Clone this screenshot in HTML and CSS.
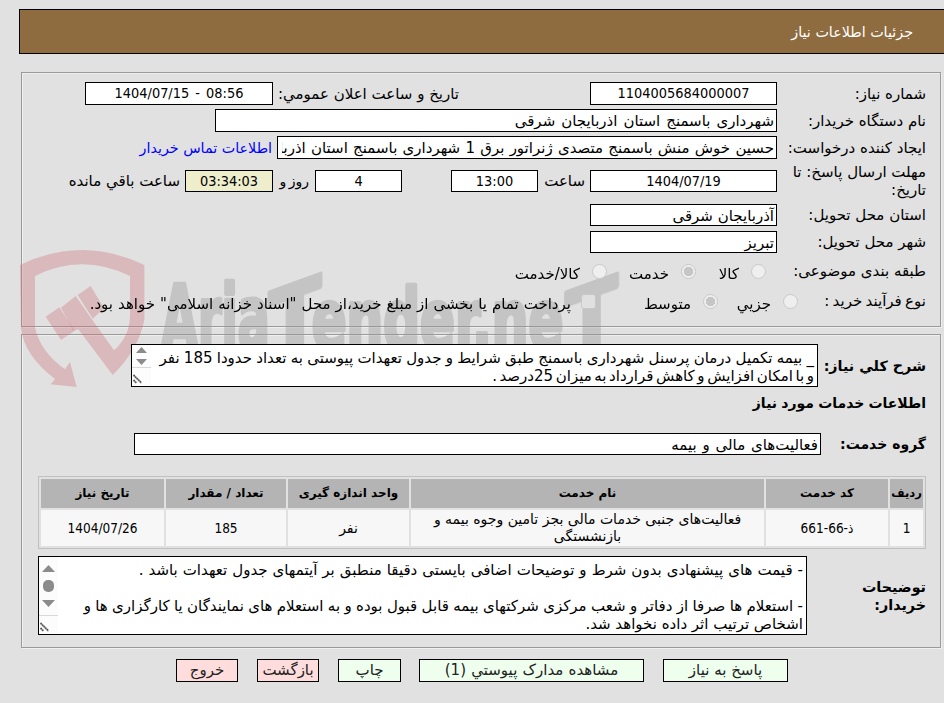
FILE: index.html
```html
<!DOCTYPE html>
<html lang="fa" dir="rtl">
<head>
    <meta charset="UTF-8">
    <title>جزئیات اطلاعات نیاز</title>
    <link rel="stylesheet" href="styles.css">
</head>
<body>

<div class="header">جزئیات اطلاعات نیاز</div>

<svg class="watermark" viewBox="30 27 1800 420" direction="ltr">
    <g fill="#cd7379" fill-opacity=".36">
        <path d="M30 75Q215-15 403 75V240Q385 330 308 405L205 268L190 272L153 203L197 168L245 237L312 331Q358 290 360 230V108Q215 38 75 108V262Q90 335 165 388L180 366L200 441L122 433L135 417Q40 345 33 262Z"/>
        <path d="M107 230L148 202L194 272L153 300ZM203 165L242 138L282 205L248 236Z"/>
    </g>
    <g class="watermark-text">
        <text x="454" y="328" font-size="268" textLength="325" lengthAdjust="spacingAndGlyphs">Aria</text>
        <text transform="translate(855 0) skewY(-20)" text-anchor="middle" y="328" font-size="270" textLength="155" lengthAdjust="spacingAndGlyphs">T</text>
        <text x="905" y="328" font-size="250" textLength="755" lengthAdjust="spacingAndGlyphs">ender.ne</text>
        <text transform="translate(1745 0) skewY(-20)" text-anchor="middle" y="328" font-size="270" textLength="155" lengthAdjust="spacingAndGlyphs">T</text>
    </g>
</svg>

<div class="panel info">
    <div class="row">
        <div class="label">شماره نیاز:</div>
        <div class="input w187 center">1104005684000007</div>
        <div class="text announce">تاریخ و ساعت اعلان عمومي:</div>
        <div class="input w188 center date-time" dir="ltr">1404/07/15 - 08:56</div>
    </div>
    <div class="row">
        <div class="label">نام دستگاه خریدار:</div>
        <div class="input w562"><span class="t-org">شهرداری باسمنج استان اذربایجان شرقی</span></div>
    </div>
    <div class="row">
        <div class="label">ایجاد کننده درخواست:</div>
        <div class="input w500"><span class="t-creator">حسین خوش منش باسمنج متصدی ژنراتور برق 1 شهرداری باسمنج استان اذربایجان شرقی</span></div>
        <a class="link">اطلاعات تماس خریدار</a>
    </div>
    <div class="row deadline">
        <div class="label two-line">مهلت ارسال پاسخ: تا<br>تاریخ:</div>
        <div class="input w187 center">1404/07/19</div>
        <div class="text hour">ساعت</div>
        <div class="input w87 center">13:00</div>
        <div class="input w87 center days">4</div>
        <div class="text day-text">روز و</div>
        <div class="input w88 center timer">03:34:03</div>
        <div class="text remain">ساعت باقي مانده</div>
    </div>
    <div class="row low">
        <div class="label">استان محل تحویل:</div>
        <div class="input w187">آذربایجان شرقی</div>
    </div>
    <div class="row low">
        <div class="label">شهر محل تحویل:</div>
        <div class="input w187">تبریز</div>
    </div>
    <div class="row radios category">
        <div class="label">طبقه بندی موضوعی:</div>
        <i class="radio"></i><span class="opt opt-goods">کالا</span>
        <i class="radio checked"></i><span class="opt opt-service">خدمت</span>
        <i class="radio"></i><span class="opt">کالا/خدمت</span>
    </div>
    <div class="row radios process">
        <div class="label">نوع فرآیند خرید :</div>
        <i class="radio"></i><span class="opt opt-small">جزيي</span>
        <i class="radio checked"></i><span class="opt opt-medium">متوسط</span>
        <i class="checkbox"></i><span class="opt opt-treasury">پرداخت تمام یا بخشی از مبلغ خرید،از محل "اسناد خزانه اسلامی" خواهد بود.</span>
    </div>
</div>

<div class="panel details">
    <div class="row summary">
        <div class="label bold">شرح کلي نیاز:</div>
        <div class="textarea area-summary">
            <div class="lines"><p class="s1">_ بیمه تکمیل درمان پرسنل شهرداری باسمنج طبق شرایط و جدول تعهدات پیوستی به تعداد حدودا 185 نفر</p><p class="s2">و با امکان افزایش و کاهش قرارداد به میزان 25درصد .</p></div>
            <svg class="scroll" width="19" height="41" viewBox="0 0 19 41">
                <path fill="#fcfcfc" d="M0 0H19V41H0Z"/>
                <path fill="#8b8b8b" d="M4 8L9.500 2L15 8ZM4 14L9.500 20L15 14Z"/>
                <path stroke="#d8d8d8" d="M0 22.500H19"/>
                <path stroke="#555" stroke-width="1.800" stroke-dasharray="1.800 .4" d="M1.500 30L9.500 38M1.500 35L4.500 38"/>
            </svg>
        </div>
    </div>
    <div class="row section-title">اطلاعات خدمات مورد نیاز</div>
    <div class="row group">
        <div class="label bold">گروه خدمت:</div>
        <div class="input w687">فعالیت‌های مالی و بیمه</div>
    </div>
    <table class="services">
        <thead>
            <tr>
                <th class="c1">ردیف</th>
                <th class="c2">کد خدمت</th>
                <th class="c3">نام خدمت</th>
                <th class="c4">واحد اندازه گیری</th>
                <th class="c5">تعداد / مقدار</th>
                <th class="c6">تاریخ نیاز</th>
            </tr>
        </thead>
        <tbody>
            <tr>
                <td class="num">1</td>
                <td class="num">ذ-66-661</td>
                <td class="name">فعالیت‌های جنبی خدمات مالی بجز تامین وجوه بیمه و<br>بازنشستگی</td>
                <td>نفر</td>
                <td class="num">185</td>
                <td class="num">1404/07/26</td>
            </tr>
        </tbody>
    </table>
    <div class="row notes">
        <div class="label bold two-line">توضیحات<br>خریدار:</div>
        <div class="textarea area-notes">
            <div class="lines"><p class="n1">- قیمت های پیشنهادی بدون شرط و توضیحات اضافی بایستی دقیقا منطبق بر آیتمهای جدول تعهدات باشد .</p><p>&nbsp;</p><p class="n2">- استعلام ها صرفا از دفاتر و شعب مرکزی شرکتهای بیمه قابل قبول بوده و به استعلام های نمایندگان یا کارگزاری ها و</p><p class="n3">اشخاص ترتیب اثر داده نخواهد شد.</p></div>
            <svg class="scroll" width="19" height="77" viewBox="0 0 19 77">
                <path fill="#fcfcfc" d="M0 0H19V77H0Z"/>
                <path fill="#8b8b8b" d="M3 15L9.500 8L16 15ZM3 43L9.500 50L16 43Z"/>
                <rect x="4" y="23" width="11" height="12" rx="5" fill="#8b8b8b"/>
                <path stroke="#d8d8d8" d="M0 58.500H19"/>
                <path stroke="#555" stroke-width="1.800" stroke-dasharray="1.800 .4" d="M1.500 66L9.500 74M1.500 71L4.500 74"/>
            </svg>
        </div>
    </div>
</div>

<div class="buttons">
    <button class="btn b-reply">پاسخ به نیاز</button>
    <button class="btn b-docs">مشاهده مدارک پیوستي (1)</button>
    <button class="btn b-print">چاپ</button>
    <button class="btn red b-back">بازگشت</button>
    <button class="btn red b-exit">خروج</button>
</div>

</body>
</html>
```
FILE: styles.css
```css
* {
    box-sizing: border-box;
}
body {
    margin: 0;
    padding-top: 9px;
    height: 703px;
    overflow: hidden;
    background: #e1e1e1;
    color: #000;
    font-family: "DejaVu Sans", sans-serif;
    font-size: 15px;
    line-height: 18px;
    white-space: nowrap;
}
.header {
    height: 45px;
    margin-left: 19px;
    padding-right: 31px;
    border: 1px solid #000;
    border-right: none;
    background: #8f6c3f;
    color: #fff;
    font-size: 14.300px;
    line-height: 44px;
}
.panel {
    width: 920px;
    margin-right: 3px;
    padding-top: 9px;
    padding-right: 14px;
    border: 1px solid #9a9a9a;
    box-shadow: inset 1px 1px #efefef, 1px 1px #efefef;
}
.info {
    height: 255px;
    margin-top: 18px;
}
.details {
    height: 314px;
    margin-top: 7px;
}
.row {
    display: flex;
    align-items: center;
    height: 23px;
    margin-bottom: 4px;
}
.label {
    flex: none;
    width: 149px;
}
.bold {
    font-weight: bold;
    font-size: 14.300px;
}
.input {
    flex: none;
    height: 100%;
    padding: 0 2px;
    border: 1px solid #000;
    background: #fff;
    line-height: 22px;
    overflow: hidden;
}
.center {
    font-family: "DejaVu Sans Condensed", "DejaVu Sans", sans-serif;
    font-stretch: condensed;
    font-size: 14.400px;
    line-height: 20px;
    text-align: center;
}
.date-time {
    word-spacing: 2px;
}
.w87 { width: 87px; }
.w88 { width: 88px; }
.w187 { width: 187px; }
.w188 { width: 188px; }
.w500 { width: 500px; }
.w562 { width: 562px; }
.w687 { width: 687px; word-spacing: 1px; }

.t-org {
    word-spacing: 1.200px;
}
.t-creator {
    display: block;
    margin-left: 2px;
    overflow: hidden;
    word-spacing: .5px;
}
.announce {
    width: 317px;
    padding-right: 131px;
}
.link {
    margin-right: 5px;
    color: #00f;
    font-size: 14.300px;
}
.deadline {
    height: 22px;
    margin-top: 11px;
    margin-bottom: 12px;
}
.hour {
    width: 52px;
    padding-right: 5px;
}
.days {
    margin-right: 49px;
}
.day-text {
    width: 42px;
    padding-right: 6px;
    font-size: 14px;
    word-spacing: -2px;
}
.timer {
    background: #eeeecc;
}
.remain {
    padding-right: 5px;
}
.low {
    height: 22px;
    margin-bottom: 5px;
}
.radios {
    height: 30px;
    margin: 0;
}
.category {
    margin-top: -2px;
}
.process .label {
    word-spacing: -1.400px;
}
.radio, .checkbox {
    flex: none;
    width: 15px;
    height: 15px;
    border: 1px solid #c8c8c8;
    border-radius: 50%;
    background: #efefef;
}
.category .radio:first-of-type {
    margin-right: 11px;
}
.checked {
    background: radial-gradient(circle, #c6c6c6 0 4.5px, #efefef 5px);
}
.checkbox {
    border-radius: 3px;
    background: #efefefaa;
}
.opt {
    flex: none;
    padding-top: 5px;
    padding-right: 12px;
}
.opt-goods { width: 55px; }
.opt-service { width: 74px; }
.process .radio:first-of-type { margin-right: -21px; }
.opt-small { width: 65px; }
.opt-medium { width: 107px; }
.opt-treasury {
    padding-right: 10px;
    word-spacing: .25px;
}

.summary {
    height: 43px;
    margin: 0;
}
.summary .label {
    width: 108px;
}
.textarea {
    flex: none;
    display: flex;
    height: 100%;
    border: 1px solid #000;
    background: #fff;
}
.area-summary { width: 687px; }
.area-notes { width: 769px; }
.lines {
    flex: 1;
    padding: 4px 3px 0 0;
}
.lines p {
    margin: 0;
}
.s1 { word-spacing: -.5px; }
.s2 { word-spacing: -2.200px; }
.n1 { word-spacing: .25px; }
.n2 { word-spacing: -.4px; }

.section-title {
    height: 18px;
    margin-top: 7px;
    margin-bottom: 21px;
    font-weight: bold;
    font-size: 14px;
    word-spacing: -.7px;
}
.group {
    height: 22px;
    margin-bottom: 21px;
}
.group .label {
    width: 105px;
    font-size: 14px;
}
.services {
    width: 888px;
    height: 73px;
    table-layout: fixed;
    border: 1px solid #c0c0c0;
    border-spacing: 2px;
    text-align: center;
}
.services th, .services td {
    padding: 0;
    height: 36px;
    background: #f7f7f7;
    font-size: 14px;
    line-height: 17px;
}
.services th {
    height: 29px;
    background: #b4b4b4;
    font-size: 12px;
}
.services .c1 {
    font-size: 11.500px;
}
.services .num {
    font-family: "DejaVu Sans Condensed", "DejaVu Sans", sans-serif;
    font-stretch: condensed;
    font-size: 13.500px;
}
.c1 { width: 33px; }
.c2 { width: 122px; }
.c4 { width: 121px; }
.c5 { width: 120px; }
.c6 { width: 123px; }

.notes {
    height: 79px;
    margin-top: 7px;
}
.notes .label {
    width: 119px;
}
.buttons {
    display: flex;
    gap: 19px;
    margin-top: 11px;
    padding-right: 156px;
}
.btn {
    height: 23px;
    padding: 0;
    border: 1px solid #000;
    background: #eeffee;
    color: #222;
    font: inherit;
    line-height: 21px;
}
.red { background: #ffdddd; }
.b-reply { width: 125px; }
.b-docs { width: 225px; word-spacing: .5px; }
.b-print { width: 63px; margin-right: -1px; }
.b-back, .b-exit { width: 62px; }

/* site mark lies over the panels, under the fields */
.watermark {
    position: absolute;
    left: 20px;
    top: 249px;
    width: 600px;
    height: 140px;
    z-index: 0;
}
.watermark-text {
    fill: #999;
    stroke: #999;
    stroke-width: 13px;
    stroke-linejoin: round;
    opacity: .4;
    font-family: "DejaVu Sans Condensed", "DejaVu Sans", sans-serif;
    font-weight: bold;
}
.input, .textarea, .radio, .checkbox, .opt {
    position: relative;
    z-index: 1;
}
```
